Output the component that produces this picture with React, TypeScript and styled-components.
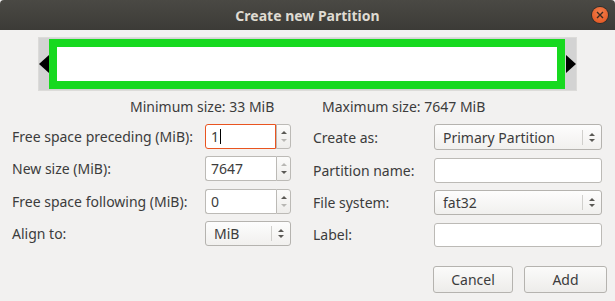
import React from 'react';
import styled, { createGlobalStyle, css } from 'styled-components';

const GlobalStyle = createGlobalStyle`
	html, body {
		margin: 0;
		padding: 0;
		background: #f2f1f0;
	}
	body {
		font-family: 'Noto Sans', 'Open Sans', sans-serif;
		font-size: 14px;
		color: #3c3c3c;
	}
`;

const Window = styled.div`
	width: 615px;
	height: 301px;
	background: #f2f1f0;
	display: flex;
	flex-direction: column;
	overflow: hidden;
`;

const TitleBar = styled.div`
	height: 30px;
	flex: none;
	display: flex;
	align-items: center;
	justify-content: center;
	position: relative;
	background: linear-gradient(#4a4944, #3c3b37);
	border-radius: 4px 4px 0 0;
	color: #dfdbd2;
	font-weight: bold;
	font-size: 14px;
`;

const CloseButton = styled.div`
	position: absolute;
	right: 7px;
	top: 7px;
	width: 16px;
	height: 16px;
	border-radius: 50%;
	background: radial-gradient(circle at 50% 35%, #f4804e, #e0501a);
	box-shadow: 0 0 0 1px #2f2e2a;
	display: flex;
	align-items: center;
	justify-content: center;
`;

const PartitionFrame = styled.div`
	margin: 7px 0 0 38px;
	width: 539px;
	box-sizing: border-box;
	border: 1px solid #dcdbd9;
	background: #d3d3d3;
	padding: 1px 0;
	display: flex;
	align-items: center;
`;

const Arrow = styled.div<{ $dir: 'left' | 'right' }>`
	width: 0;
	height: 0;
	flex: none;
	border-top: 9px solid transparent;
	border-bottom: 9px solid transparent;
	${(p) =>
		p.$dir === 'left'
			? css`
					border-right: 10px solid #000;
			  `
			: css`
					border-left: 10px solid #000;
			  `}
`;

const PartitionBlock = styled.div`
	flex: 1;
	height: 50px;
	box-sizing: border-box;
	border: 8px solid #17d91f;
	background: #ffffff;
	margin-right: 1px;
`;

const SizeInfo = styled.div`
	display: grid;
	grid-template-columns: 192px auto;
	padding-left: 130px;
	margin-top: 5px;
	height: 20px;
	align-items: center;
`;

const Form = styled.div`
	display: flex;
	margin-top: 8px;
	padding-left: 12px;
`;

const LeftGrid = styled.div`
	display: grid;
	grid-template-columns: 193px 86px;
	grid-auto-rows: 25px;
	row-gap: 7.3px;
	align-items: center;
`;

const RightGrid = styled.div`
	display: grid;
	grid-template-columns: 121px 168px;
	grid-template-rows: 26px 25px 25px 24px;
	row-gap: 7.5px;
	align-items: center;
	margin-left: 22px;
`;

const Label = styled.div`
	white-space: nowrap;
`;

const SpinBox = styled.div`
	display: flex;
	height: 25px;
	width: 86px;
`;

const SpinEntry = styled.div<{ $focused?: boolean }>`
	flex: 1;
	box-sizing: border-box;
	border: 1px solid ${(p) => (p.$focused ? '#e95420' : '#bcbab6')};
	border-right: ${(p) => (p.$focused ? '1px solid #e95420' : 'none')};
	border-radius: 3px 0 0 3px;
	background: #fff;
	padding-left: 5px;
	display: flex;
	align-items: center;
`;

const Caret = styled.span`
	display: inline-block;
	width: 1px;
	height: 15px;
	background: #000;
	margin-left: 1px;
`;

const SpinButtons = styled.div`
	width: 15px;
	box-sizing: border-box;
	border: 1px solid #bcbab6;
	border-radius: 0 3px 3px 0;
	background: linear-gradient(#fbfbfa, #eeedeb);
	display: flex;
	flex-direction: column;
	align-items: center;
	justify-content: center;
	gap: 5px;
`;

const Tri = styled.div<{ $up?: boolean; $dim?: boolean; $size?: number }>`
	width: 0;
	height: 0;
	border-left: ${(p) => p.$size ?? 3}px solid transparent;
	border-right: ${(p) => p.$size ?? 3}px solid transparent;
	${(p) =>
		p.$up
			? css`
					border-bottom: ${p.$size ?? 3}px solid ${p.$dim ? '#b8b7b4' : '#5a5955'};
			  `
			: css`
					border-top: ${p.$size ?? 3}px solid ${p.$dim ? '#b8b7b4' : '#5a5955'};
			  `}
`;

const Combo = styled.div<{ $height?: number }>`
	box-sizing: border-box;
	height: ${(p) => p.$height ?? 25}px;
	border: 1px solid #b5b3af;
	border-radius: 3px;
	background: linear-gradient(#fdfdfd, #f1f0ee);
	display: flex;
	align-items: center;
	padding-left: 8px;
`;

const ComboText = styled.div`
	flex: 1;
`;

const ComboArrows = styled.div`
	width: 18px;
	height: 15px;
	border-left: 1px solid #d0cfcc;
	display: flex;
	flex-direction: column;
	align-items: center;
	justify-content: center;
	gap: 3px;
`;

const Entry = styled.div<{ $height?: number }>`
	box-sizing: border-box;
	height: ${(p) => p.$height ?? 25}px;
	border: 1px solid #bcbab6;
	border-radius: 3px;
	background: #fff;
`;

const ButtonRow = styled.div`
	display: flex;
	justify-content: flex-end;
	gap: 11px;
	padding-right: 8px;
	margin-top: auto;
	margin-bottom: 8px;
`;

const Button = styled.div<{ $width: number }>`
	width: ${(p) => p.$width}px;
	height: 27px;
	box-sizing: border-box;
	border: 1px solid #b5b3af;
	border-radius: 3px;
	background: linear-gradient(#fbfbfa, #edecea);
	display: flex;
	align-items: center;
	justify-content: center;
`;

interface SpinProps {
	value: string;
	focused?: boolean;
	atMax?: boolean;
	atMin?: boolean;
}

const Spin = ({ value, focused, atMax, atMin }: SpinProps) => (
	<SpinBox>
		<SpinEntry $focused={focused}>
			{value}
			{focused && <Caret />}
		</SpinEntry>
		<SpinButtons>
			<Tri $up $dim={atMax} />
			<Tri $dim={atMin} />
		</SpinButtons>
	</SpinBox>
);

const ComboBox = ({ text, height }: { text: string; height?: number }) => (
	<Combo $height={height}>
		<ComboText>{text}</ComboText>
		<ComboArrows>
			<Tri $up $size={3} />
			<Tri $size={3} />
		</ComboArrows>
	</Combo>
);

const App = () => {
	return (
		<Window>
			<GlobalStyle />
			<TitleBar>
				Create new Partition
				<CloseButton>
					<svg width="8" height="8" viewBox="0 0 8 8">
						<path d="M1 1 L7 7 M7 1 L1 7" stroke="#3a2a20" strokeWidth="1.4" />
					</svg>
				</CloseButton>
			</TitleBar>
			<PartitionFrame>
				<Arrow $dir="left" />
				<PartitionBlock />
				<Arrow $dir="right" />
			</PartitionFrame>
			<SizeInfo>
				<span>Minimum size: 33 MiB</span>
				<span>Maximum size: 7647 MiB</span>
			</SizeInfo>
			<Form>
				<LeftGrid>
					<Label>Free space preceding (MiB):</Label>
					<Spin value="1" focused atMin />
					<Label>New size (MiB):</Label>
					<Spin value="7647" atMax />
					<Label>Free space following (MiB):</Label>
					<Spin value="0" atMin />
					<Label>Align to:</Label>
					<ComboBox text="MiB" />
				</LeftGrid>
				<RightGrid>
					<Label>Create as:</Label>
					<ComboBox text="Primary Partition" height={26} />
					<Label>Partition name:</Label>
					<Entry $height={25} />
					<Label>File system:</Label>
					<ComboBox text="fat32" height={25} />
					<Label>Label:</Label>
					<Entry $height={24} />
				</RightGrid>
			</Form>
			<ButtonRow>
				<Button $width={80}>Cancel</Button>
				<Button $width={83}>Add</Button>
			</ButtonRow>
		</Window>
	);
};

export default App;
